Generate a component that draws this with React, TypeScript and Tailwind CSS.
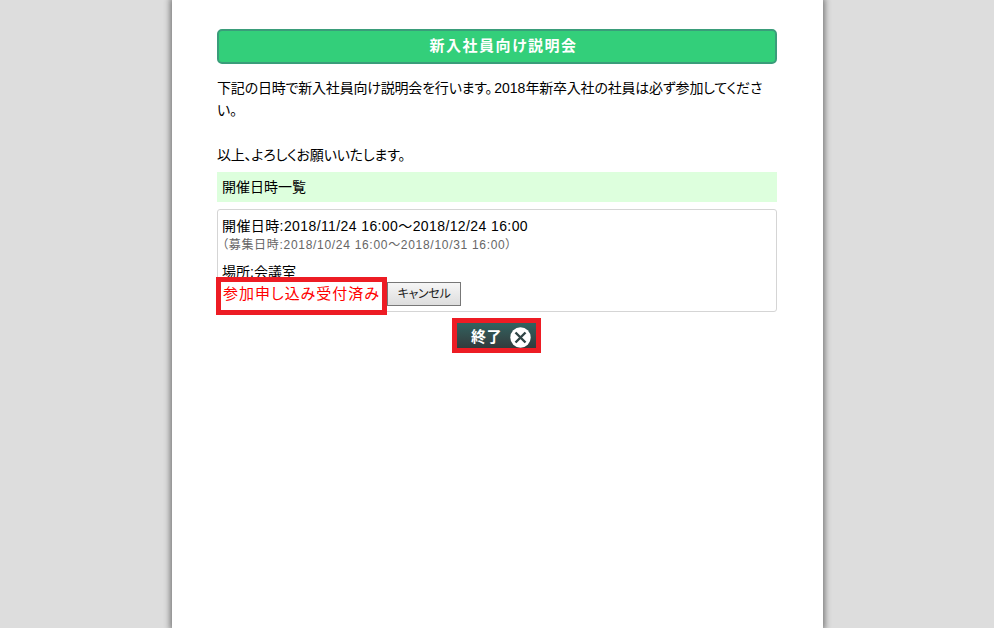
import React from 'react';

const font = { fontFamily: '"Liberation Sans", "Noto Sans CJK JP", sans-serif' };

export default function App() {
    return (
        <div style={font} className="h-[628px] overflow-hidden bg-[#dddddd] flex justify-center text-[14px] text-black [font-feature-settings:'palt']">
            <div className="w-[651px] h-[628px] ml-[1px] bg-white pl-[45px] pr-[46px] pt-[29px] shadow-[0_0_6px_2px_rgba(0,0,0,0.45)]">
                <h1 className="h-[35px] rounded-[5px] border-2 border-[#3a9d7a] bg-[#33cf7a] pl-[13px] text-white font-bold text-[15px] tracking-[1.5px] flex items-center justify-center">
                    新入社員向け説明会
                </h1>

                <div className="mt-[13px] leading-[22px] tracking-[-0.2px]">
                    <p>下記の日時で新入社員向け説明会を行います。<span className="ml-[2px] tracking-normal">2018</span>年新卒入社の社員は必ず参加してくださ<br />い。</p>
                    <p className="mt-[23px]">以上、よろしくお願いいたします。</p>
                </div>

                <div className="mt-[6px] h-[30px] bg-[#ddffdd] pl-[5px] flex items-center">開催日時一覧</div>

                <div className="relative mt-[7px] h-[103px] border border-[#d5d5d5] rounded-[3px] pl-[4px] pt-[6px]">
                    <p className="leading-[20px] tracking-[0.4px]">開催日時:2018/11/24 16:00～2018/12/24 16:00</p>
                    <p className="leading-[18px] text-[12px] text-[#666666] tracking-[0.7px]">（募集日時:2018/10/24 16:00～2018/10/31 16:00）</p>
                    <p className="leading-[20px] mt-[8px]">場所:会議室</p>
                    <div className="flex items-center h-[24px]">
                        <span className="text-[15px] text-[#ff0000] ml-[1px] w-[164px] tracking-[1px] whitespace-nowrap">参加申し込み受付済み</span>
                        <button className="w-[74px] h-[24px] border border-[#777777] bg-gradient-to-b from-[#f6f6f6] to-[#dddddd] text-[12px] tracking-[-0.3px] text-[#222222]">キャンセル</button>
                    </div>
                    {/* red highlight around the status */}
                    <div className="absolute left-[-2px] top-[67px] w-[171px] h-[38px] border-[5px] border-[#ed1c24]" />
                </div>

                <div className="mt-[11px] flex justify-center">
                    <div className="relative ml-[-1px] w-[79px] h-[27px] bg-gradient-to-b from-[#2f6360] to-[#32383a] flex items-center pl-[14px] gap-[8px] text-white font-bold text-[15px] tracking-[0.5px]">
                        <span className="pt-[1px]">終了</span>
                        <svg width="21" height="21" viewBox="0 0 21 21" className="mt-[1px]">
                            <circle cx="10.5" cy="10.5" r="10.2" fill="#ffffff" />
                            <path d="M5.5 5.5 L15.5 15.5 M15.5 5.5 L5.5 15.5" stroke="#2f4445" strokeWidth="2.4" />
                        </svg>
                        {/* red highlight around the button */}
                        <div className="absolute left-[-5px] top-[-5px] w-[89px] h-[35px] border-[5px] border-[#ed1c24]" />
                    </div>
                </div>
            </div>
        </div>
    );
}
